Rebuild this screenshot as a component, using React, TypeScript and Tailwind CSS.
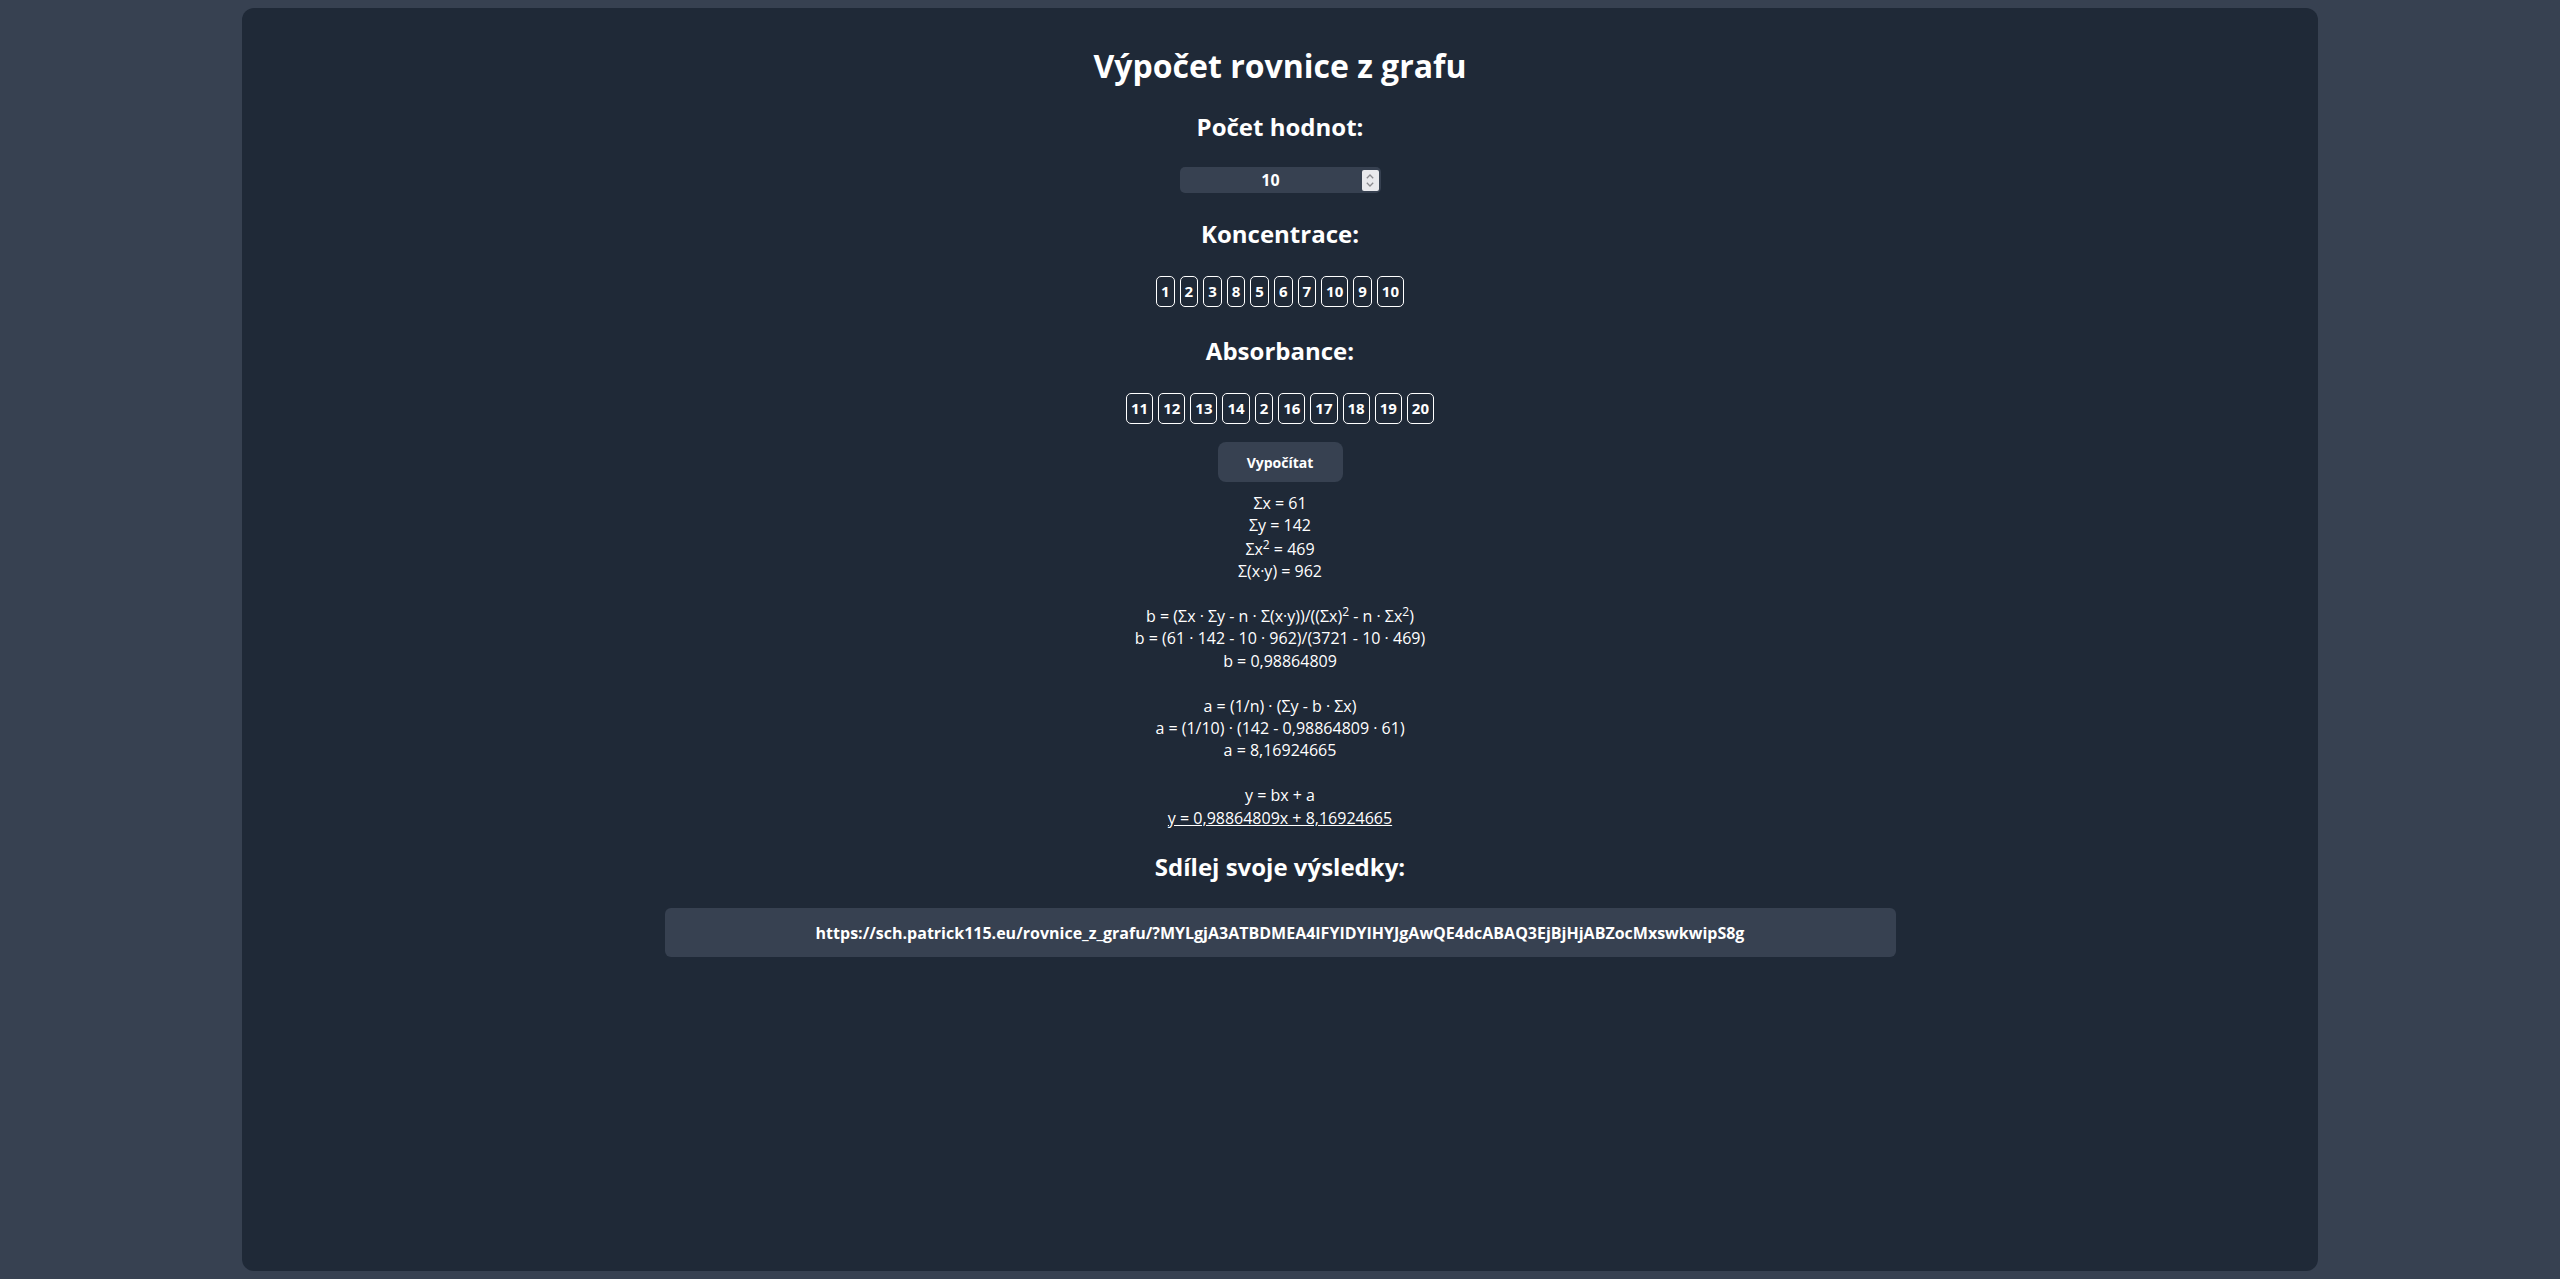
const koncentrace = [1, 2, 3, 8, 5, 6, 7, 10, 9, 10];
const absorbance = [11, 12, 13, 14, 2, 16, 17, 18, 19, 20];

function ValueBox({ value }: { value: number }) {
  return (
    <span className="flex h-[31px] items-center rounded-[5px] border border-white px-[4px] text-[15px] font-bold leading-none text-white">
      {value}
    </span>
  );
}

function Spinner() {
  return (
    <span className="absolute right-[2px] top-[3px] flex h-[21px] w-[17px] flex-col items-center justify-center gap-[3px] rounded-[2px] bg-[#e9e9ed]">
      <svg width="8" height="5" viewBox="0 0 8 5" fill="none">
        <path d="M0.8 4.2 L4 1 L7.2 4.2" stroke="#8a8a8f" strokeWidth="1.3" />
      </svg>
      <svg width="8" height="5" viewBox="0 0 8 5" fill="none">
        <path d="M0.8 0.8 L4 4 L7.2 0.8" stroke="#8a8a8f" strokeWidth="1.3" />
      </svg>
    </span>
  );
}

export default function App() {
  return (
    <div className="flex min-h-screen justify-center bg-[#374151] py-2 font-['Open_Sans',sans-serif]">
      <div className="flex h-[1263px] w-[2076px] flex-col items-center rounded-xl bg-[#1f2937] pt-[38px] text-white">
        <h1 className="text-[32px] font-bold leading-[40px]">Výpočet rovnice z grafu</h1>

        <h2 className="mt-[25px] text-[24px] font-bold leading-[32px]">Počet hodnot:</h2>
        <div className="relative mt-[24px] flex h-[26px] w-[201px] items-center rounded-[5px] bg-[#374151] pr-[19px]">
          <span className="w-full text-center text-[16px] font-bold">10</span>
          <Spinner />
        </div>

        <h2 className="mt-[25px] text-[24px] font-bold leading-[32px]">Koncentrace:</h2>
        <div className="mt-[26px] flex gap-[5px]">
          {koncentrace.map((v, i) => (
            <ValueBox key={i} value={v} />
          ))}
        </div>

        <h2 className="mt-[28px] text-[24px] font-bold leading-[32px]">Absorbance:</h2>
        <div className="mt-[26px] flex gap-[5px]">
          {absorbance.map((v, i) => (
            <ValueBox key={i} value={v} />
          ))}
        </div>

        <button className="mt-[18px] h-[40px] w-[125px] rounded-lg bg-[#374151] text-[14px] font-bold text-white">
          Vypočítat
        </button>

        <div className="mt-[10px] text-center text-[16px] leading-[22.4px]">
          <p>Σx = 61</p>
          <p>Σy = 142</p>
          <p className="pt-[1px]">
            Σx<sup>2</sup> = 469
          </p>
          <p>Σ(x·y) = 962</p>
          <br />
          <p>
            b = (Σx · Σy - n · Σ(x·y))/((Σx)<sup>2</sup> - n · Σx<sup>2</sup>)
          </p>
          <p>b = (61 · 142 - 10 · 962)/(3721 - 10 · 469)</p>
          <p>b = 0,98864809</p>
          <br />
          <p>a = (1/n) · (Σy - b · Σx)</p>
          <p>a = (1/10) · (142 - 0,98864809 · 61)</p>
          <p>a = 8,16924665</p>
          <br />
          <p>y = bx + a</p>
          <p className="underline">y = 0,98864809x + 8,16924665</p>
        </div>

        <h2 className="mt-[22px] text-[24px] font-bold leading-[32px]">Sdílej svoje výsledky:</h2>
        <div className="mt-[25px] flex h-[49px] w-[1231px] items-center justify-center rounded-md bg-[#374151] text-[16px] font-bold">
          https://sch.patrick115.eu/rovnice_z_grafu/?MYLgjA3ATBDMEA4IFYIDYIHYJgAwQE4dcABAQ3EjBjHjABZocMxswkwipS8g
        </div>
      </div>
    </div>
  );
}
